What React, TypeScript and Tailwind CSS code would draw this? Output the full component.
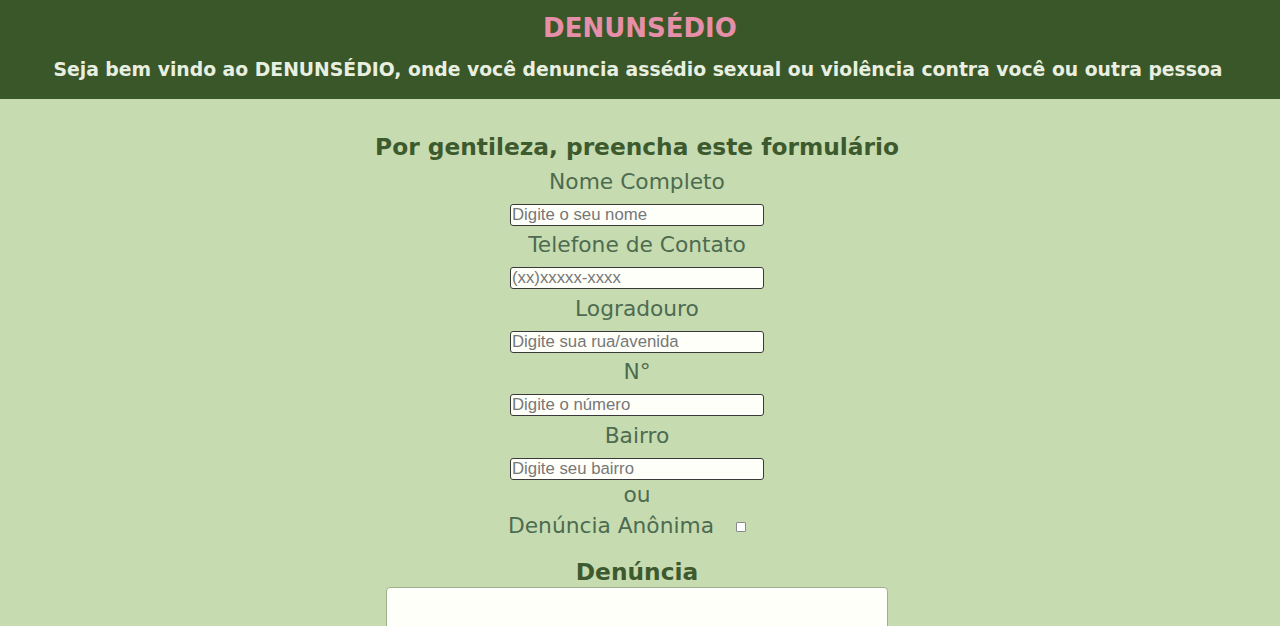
import React, { useState } from "react";

const fields = [
  { label: "Nome Completo", placeholder: "Digite o seu nome" },
  { label: "Telefone de Contato", placeholder: "(xx)xxxxx-xxxx" },
  { label: "Logradouro", placeholder: "Digite sua rua/avenida" },
  { label: "N°", placeholder: "Digite o número" },
  { label: "Bairro", placeholder: "Digite seu bairro" },
];

const App: React.FC = () => {
  const [anonimo, setAnonimo] = useState(false);
  const [texto, setTexto] = useState("");

  return (
    <div className="min-h-screen w-full bg-[#c7dbb0] font-['DejaVu_Sans',sans-serif] overflow-hidden">
      {/* cabeçalho */}
      <header className="h-[99px] bg-[#3a5729] flex flex-col items-center pt-[12px]">
        <h1 className="text-[26px] leading-[32px] font-bold text-[#e68fa8]">DENUNSÉDIO</h1>
        <p className="mt-[14px] pr-[4px] text-[18.8px] leading-[24px] font-bold text-[#e8efe0]">
          Seja bem vindo ao DENUNSÉDIO, onde você denuncia assédio sexual ou violência contra você ou outra pessoa
        </p>
      </header>

      {/* formulário */}
      <form className="flex flex-col items-center pr-[6px] pt-[33px]">
        <h2 className="text-[23.3px] leading-[30px] font-bold text-[#3d5a2e]">
          Por gentileza, preencha este formulário
        </h2>

        {fields.map((f) => (
          <div key={f.label} className="flex flex-col items-center mt-[6.5px]">
            <label className="text-[21.75px] leading-[26px] text-[#4d6b50]">{f.label}</label>
            <input
              type="text"
              placeholder={f.placeholder}
              className="mt-[9px] w-[254px] h-[22px] px-[1px] bg-[#fffffa] border-[1.5px] border-[#3a3a3a] rounded-[3px] font-['Liberation_Sans',Arial,sans-serif] text-[16.75px] text-[#333] placeholder:text-[#777] outline-none"
            />
          </div>
        ))}

        <span className="mt-[2px] text-[21.75px] leading-[26px] text-[#4d6b50]">ou</span>
        <label className="mt-[5px] pr-[20px] flex items-center text-[21.75px] leading-[26px] text-[#4d6b50]">
          Denúncia Anônima
          <input
            type="checkbox"
            checked={anonimo}
            onChange={(e) => setAnonimo(e.target.checked)}
            className="ml-[22px] mt-[2px] appearance-none w-[10px] h-[10px] bg-white border border-[#8a8a8a] rounded-[1px] checked:bg-[#3a5729]"
          />
        </label>

        <h2 className="mt-[18px] text-[23.3px] leading-[30px] font-bold text-[#3d5a2e]">Denúncia</h2>
        <textarea
          value={texto}
          onChange={(e) => setTexto(e.target.value)}
          className="w-[502px] h-[160px] bg-[#fffffa] border border-[#9fb08f] rounded-[4px] resize-none outline-none"
        />
      </form>
    </div>
  );
};

export default App;
